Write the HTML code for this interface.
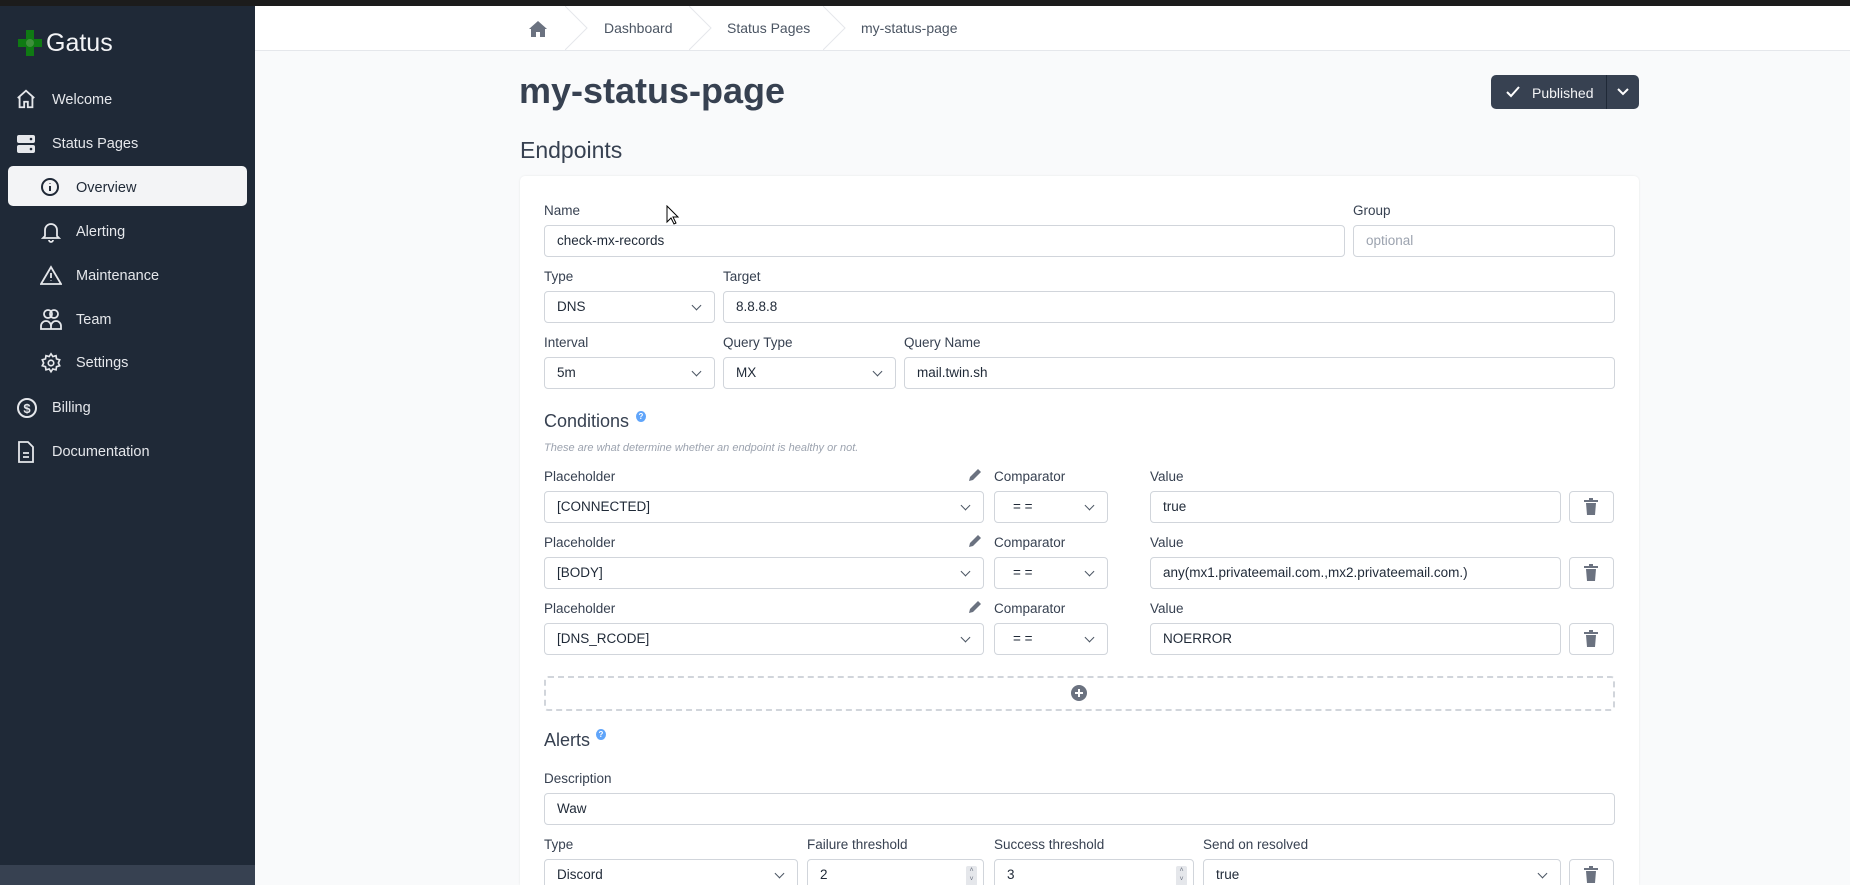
<!DOCTYPE html>
<html><head><meta charset="utf-8"><style>
*{box-sizing:border-box;margin:0;padding:0}
html{width:1850px;height:885px;overflow:hidden}
body{width:1850px;height:885px;overflow:hidden;background:#f9fafb;font-family:"Liberation Sans",sans-serif;position:relative;color:#1f2937}
.a{position:absolute}
#top{left:0;top:0;width:1850px;height:6px;background:#1c1c1c}
#side{left:0;top:6px;width:255px;height:879px;background:#1f2937}
#sideb{left:0;top:865px;width:255px;height:20px;background:#374151}
.nav{color:#e5e7eb;font-size:14.5px;line-height:20px}
.nav svg{position:absolute}
#hdr{left:255px;top:6px;width:1595px;height:45px;background:#fff;border-bottom:1px solid #e5e7eb}
.bc{font-size:14px;color:#4b5563;top:20px}
.chev{top:6px;width:24px;height:44px}
.lbl{font-size:13.5px;color:#374151}
.in{background:#fff;border:1px solid #d1d5db;border-radius:4px;height:32px;font-size:13.5px;color:#1f2937;padding:0 12px;line-height:30px}
.ph{color:#9ca3af}
.sel::after{content:"";position:absolute;right:14px;top:10px;width:6px;height:6px;border-right:1.5px solid #4b5563;border-bottom:1.5px solid #4b5563;transform:rotate(45deg)}
.trash{background:#fff;border:1px solid #d1d5db;border-radius:4px;width:45px;height:32px}
.spin{position:absolute;right:6px;top:6px;width:11px;height:20px;background:#e5e7eb;border-radius:2px;font-size:7px;color:#6b7280;line-height:9px;text-align:center}
</style></head><body>
<div class="a" id="top"></div>
<div class="a" id="side"></div>
<div class="a" id="sideb"></div>
<svg class="a" style="left:18px;top:30px" width="24" height="26" viewBox="0 0 24 26"><path d="M8 0h8v9h8v8h-8v9H8v-9H0V9h8z" fill="#0f7a13"/><circle cx="12" cy="13" r="4" fill="#3d8f3a"/></svg>
<div class="a" style="left:46px;top:29px;font-size:25px;color:#f3f4f6">Gatus</div>
<div class="a" style="left:8px;top:166px;width:239px;height:40px;background:#f3f4f6;border-radius:5px"></div>
<div class="a nav" style="left:52px;top:90px">Welcome</div>
<svg class="a" style="left:15px;top:88px" width="22" height="22" viewBox="0 0 24 24" fill="none" stroke="#e5e7eb" stroke-width="2"><path d="M3 11l9-8 9 8M5 9v12h5v-6h4v6h5V9"/></svg>
<div class="a nav" style="left:52px;top:134px">Status Pages</div>
<svg class="a" style="left:16px;top:134px" width="20" height="20" viewBox="0 0 20 20"><rect x="1" y="1" width="18" height="8" rx="2" fill="#e5e7eb"/><rect x="1" y="11" width="18" height="8" rx="2" fill="#e5e7eb"/><circle cx="15" cy="5" r="1.3" fill="#1f2937"/><circle cx="15" cy="15" r="1.3" fill="#1f2937"/></svg>
<div class="a nav" style="left:76px;top:178px;color:#1f2937">Overview</div>
<svg class="a" style="left:40px;top:177px" width="20" height="20" viewBox="0 0 20 20" fill="none" stroke="#1f2937" stroke-width="2"><circle cx="10" cy="10" r="8"/><path d="M10 9v5M10 6v.5"/></svg>
<div class="a nav" style="left:76px;top:222px">Alerting</div>
<svg class="a" style="left:41px;top:221px" width="20" height="22" viewBox="0 0 20 22" fill="none" stroke="#e5e7eb" stroke-width="1.8"><path d="M4 15V9a6 6 0 0 1 12 0v6l2 2H2zM8 19a2 2 0 0 0 4 0"/></svg>
<div class="a nav" style="left:76px;top:266px">Maintenance</div>
<svg class="a" style="left:40px;top:265px" width="22" height="20" viewBox="0 0 22 20" fill="none" stroke="#e5e7eb" stroke-width="1.8"><path d="M11 2L1 19h20zM11 8v5M11 15.5v.5"/></svg>
<div class="a nav" style="left:76px;top:310px">Team</div>
<svg class="a" style="left:40px;top:308px" width="22" height="22" viewBox="0 0 22 22" fill="none" stroke="#e5e7eb" stroke-width="1.8"><circle cx="8" cy="6" r="4"/><circle cx="14" cy="6" r="4"/><path d="M1 21v-3a5 5 0 0 1 10 0v3zM11 21v-3a5 5 0 0 1 10 0v3z"/></svg>
<div class="a nav" style="left:76px;top:353px">Settings</div>
<svg class="a" style="left:40px;top:352px" width="22" height="22" viewBox="0 0 24 24" fill="none" stroke="#e5e7eb" stroke-width="1.8"><circle cx="12" cy="12" r="3"/><path d="M12 2l2 3 3.5-1 .5 3.5 3.5 1-1.5 3.5 1.5 3-3.5 1-.5 3.5-3.5-1-2 3-2-3-3.5 1-.5-3.5-3.5-1L4 12 2.5 8.5l3.5-1L6.5 4 10 5z"/></svg>
<div class="a nav" style="left:52px;top:398px">Billing</div>
<svg class="a" style="left:16px;top:397px" width="22" height="22" viewBox="0 0 22 22" fill="none" stroke="#e5e7eb" stroke-width="2"><circle cx="11" cy="11" r="9"/><text x="11" y="16" font-size="13" font-weight="bold" fill="#e5e7eb" stroke="none" text-anchor="middle" font-family="Liberation Sans">$</text></svg>
<div class="a nav" style="left:52px;top:442px">Documentation</div>
<svg class="a" style="left:17px;top:441px" width="18" height="22" viewBox="0 0 18 22" fill="none" stroke="#e5e7eb" stroke-width="1.8"><path d="M2 1h9l5 5v15H2zM6 12h6M6 16h6"/></svg>

<div class="a" id="hdr"></div>
<svg class="a" style="left:529px;top:21px" width="18" height="16" viewBox="0 0 18 16"><path d="M9 0L0 8h2v8h5v-5h4v5h5V8h2z" fill="#6b7280"/></svg>
<svg class="a chev" style="left:565px" viewBox="0 0 24 44"><path d="M0 0l22 22L0 44" fill="none" stroke="#e5e7eb"/></svg>
<div class="a bc" style="left:604px">Dashboard</div>
<svg class="a chev" style="left:689px" viewBox="0 0 24 44"><path d="M0 0l22 22L0 44" fill="none" stroke="#e5e7eb"/></svg>
<div class="a bc" style="left:727px">Status Pages</div>
<svg class="a chev" style="left:823px" viewBox="0 0 24 44"><path d="M0 0l22 22L0 44" fill="none" stroke="#e5e7eb"/></svg>
<div class="a bc" style="left:861px">my-status-page</div>

<div class="a" style="left:519px;top:70px;font-size:36px;font-weight:bold;color:#374151">my-status-page</div>
<div class="a" style="left:1491px;top:75px;width:148px;height:34px;background:#374151;border-radius:5px"></div>
<div class="a" style="left:1606px;top:75px;width:1px;height:34px;background:#1f2937"></div>
<svg class="a" style="left:1506px;top:86px" width="14" height="12" viewBox="0 0 14 12"><path d="M1 6l4 4 8-9" fill="none" stroke="#fff" stroke-width="2"/></svg>
<div class="a" style="left:1532px;top:85px;font-size:14px;color:#f3f4f6">Published</div>
<svg class="a" style="left:1617px;top:88px" width="12" height="8" viewBox="0 0 12 8"><path d="M1 1l5 5 5-5" fill="none" stroke="#fff" stroke-width="2"/></svg>

<div class="a" style="left:520px;top:137px;font-size:23px;color:#374151">Endpoints</div>
<div class="a" style="left:520px;top:176px;width:1119px;height:709px;background:#fff;border-radius:5px 5px 0 0;box-shadow:0 0 2px rgba(0,0,0,.08)"></div>

<div class="a lbl" style="left:544px;top:203px">Name</div>
<div class="a in" style="left:544px;top:225px;width:801px">check-mx-records</div>
<div class="a lbl" style="left:1353px;top:203px">Group</div>
<div class="a in ph" style="left:1353px;top:225px;width:262px">optional</div>

<div class="a lbl" style="left:544px;top:269px">Type</div>
<div class="a in sel" style="left:544px;top:291px;width:171px">DNS</div>
<div class="a lbl" style="left:723px;top:269px">Target</div>
<div class="a in" style="left:723px;top:291px;width:892px">8.8.8.8</div>

<div class="a lbl" style="left:544px;top:335px">Interval</div>
<div class="a in sel" style="left:544px;top:357px;width:171px">5m</div>
<div class="a lbl" style="left:723px;top:335px">Query Type</div>
<div class="a in sel" style="left:723px;top:357px;width:173px">MX</div>
<div class="a lbl" style="left:904px;top:335px">Query Name</div>
<div class="a in" style="left:904px;top:357px;width:711px">mail.twin.sh</div>

<div class="a" style="left:544px;top:411px;font-size:18px;color:#374151">Conditions</div>
<div class="a" style="left:636px;top:411px;width:10px;height:11px;border-radius:50%;background:#60a5fa;color:#fff;font-size:8px;text-align:center;line-height:11px;font-weight:bold">?</div>
<div class="a" style="left:544px;top:442px;font-size:11px;font-style:italic;color:#9ca3af">These are what determine whether an endpoint is healthy or not.</div>

<div class="a lbl" style="left:544px;top:469px">Placeholder</div>
<div class="a lbl" style="left:994px;top:469px">Comparator</div>
<div class="a lbl" style="left:1150px;top:469px">Value</div>
<div class="a in sel" style="left:544px;top:491px;width:440px">[CONNECTED]</div>
<div class="a in sel" style="left:994px;top:491px;width:114px;padding-left:18px">= =</div>
<div class="a in" style="left:1150px;top:491px;width:411px">true</div>
<div class="a trash" style="left:1569px;top:491px"></div>

<div class="a lbl" style="left:544px;top:535px">Placeholder</div>
<div class="a lbl" style="left:994px;top:535px">Comparator</div>
<div class="a lbl" style="left:1150px;top:535px">Value</div>
<div class="a in sel" style="left:544px;top:557px;width:440px">[BODY]</div>
<div class="a in sel" style="left:994px;top:557px;width:114px;padding-left:18px">= =</div>
<div class="a in" style="left:1150px;top:557px;width:411px">any(mx1.privateemail.com.,mx2.privateemail.com.)</div>
<div class="a trash" style="left:1569px;top:557px"></div>

<div class="a lbl" style="left:544px;top:601px">Placeholder</div>
<div class="a lbl" style="left:994px;top:601px">Comparator</div>
<div class="a lbl" style="left:1150px;top:601px">Value</div>
<div class="a in sel" style="left:544px;top:623px;width:440px">[DNS_RCODE]</div>
<div class="a in sel" style="left:994px;top:623px;width:114px;padding-left:18px">= =</div>
<div class="a in" style="left:1150px;top:623px;width:411px">NOERROR</div>
<div class="a trash" style="left:1569px;top:623px"></div>

<div class="a" style="left:544px;top:676px;width:1071px;height:35px;border:2px dashed #d1d5db;border-radius:4px"></div>
<svg class="a" style="left:1071px;top:685px" width="16" height="16" viewBox="0 0 16 16"><circle cx="8" cy="8" r="8" fill="#6b7280"/><path d="M8 4v8M4 8h8" stroke="#fff" stroke-width="2"/></svg>

<div class="a" style="left:544px;top:730px;font-size:18px;color:#374151">Alerts</div>
<div class="a" style="left:596px;top:729px;width:10px;height:11px;border-radius:50%;background:#60a5fa;color:#fff;font-size:8px;text-align:center;line-height:11px;font-weight:bold">?</div>

<div class="a lbl" style="left:544px;top:771px">Description</div>
<div class="a in" style="left:544px;top:793px;width:1071px">Waw</div>

<div class="a lbl" style="left:544px;top:837px">Type</div>
<div class="a lbl" style="left:807px;top:837px">Failure threshold</div>
<div class="a lbl" style="left:994px;top:837px">Success threshold</div>
<div class="a lbl" style="left:1203px;top:837px">Send on resolved</div>
<div class="a in sel" style="left:544px;top:859px;width:254px">Discord</div>
<div class="a in" style="left:807px;top:859px;width:177px">2<span class="spin">˄<br>˅</span></div>
<div class="a in" style="left:994px;top:859px;width:200px">3<span class="spin">˄<br>˅</span></div>
<div class="a in sel" style="left:1203px;top:859px;width:358px">true</div>
<div class="a trash" style="left:1569px;top:859px"></div>

<svg class="a" style="left:967px;top:467px" width="16" height="16" viewBox="0 0 16 16"><path d="M2 14l1-4 8-8 3 3-8 8z" fill="#6b7280"/></svg>
<svg class="a" style="left:967px;top:533px" width="16" height="16" viewBox="0 0 16 16"><path d="M2 14l1-4 8-8 3 3-8 8z" fill="#6b7280"/></svg>
<svg class="a" style="left:967px;top:599px" width="16" height="16" viewBox="0 0 16 16"><path d="M2 14l1-4 8-8 3 3-8 8z" fill="#6b7280"/></svg>
<svg class="a" style="left:1584px;top:498px" width="14" height="17" viewBox="0 0 14 17"><path d="M0 2h14v2H0zM5 0h4v2H5zM2 5h10l-1 12H3z" fill="#6b7280"/></svg>
<svg class="a" style="left:1584px;top:564px" width="14" height="17" viewBox="0 0 14 17"><path d="M0 2h14v2H0zM5 0h4v2H5zM2 5h10l-1 12H3z" fill="#6b7280"/></svg>
<svg class="a" style="left:1584px;top:630px" width="14" height="17" viewBox="0 0 14 17"><path d="M0 2h14v2H0zM5 0h4v2H5zM2 5h10l-1 12H3z" fill="#6b7280"/></svg>
<svg class="a" style="left:1584px;top:866px" width="14" height="17" viewBox="0 0 14 17"><path d="M0 2h14v2H0zM5 0h4v2H5zM2 5h10l-1 12H3z" fill="#6b7280"/></svg>
<svg class="a" style="left:666px;top:205px" width="14" height="20" viewBox="0 0 14 20"><path d="M1 1v16l4-4 3 6 2-1-3-6h5z" fill="#fff" stroke="#000"/></svg>
</body></html>
